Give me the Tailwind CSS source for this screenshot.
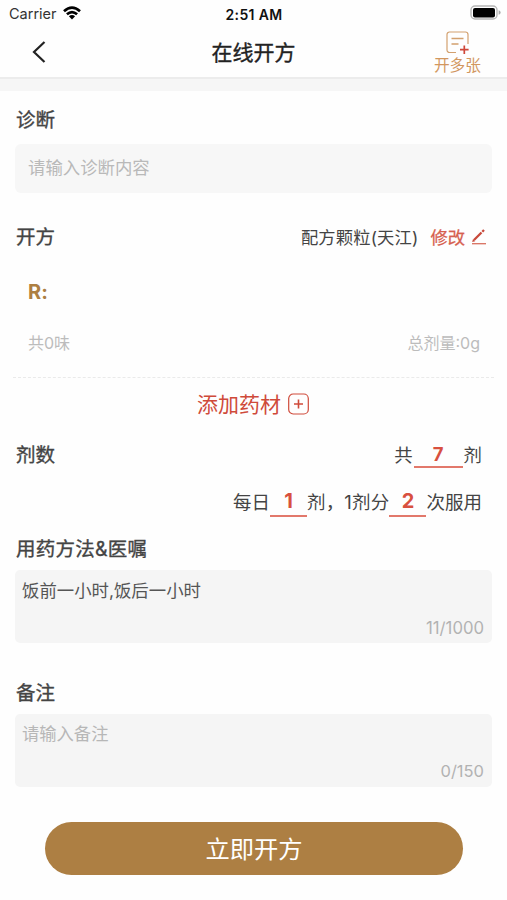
<!DOCTYPE html>
<html lang="zh-CN">
<head>
<meta charset="utf-8">
<title>在线开方</title>
<script src="https://cdn.jsdelivr.net/npm/@tailwindcss/browser@4"></script>
</head>
<body class="bg-white">
<div class="w-[507px] h-[900px] overflow-hidden bg-[#fefefe] flex flex-col font-['Inter','Noto_Sans_CJK_SC',sans-serif] text-[#444] whitespace-nowrap">
  <!-- Status bar -->
  <div class="grid grid-cols-3 items-center h-7 shrink-0 pl-[9px] pr-[6px] text-[#111]">
    <div class="flex items-center gap-[6px]">
      <span class="text-[14.5px] text-[#333]">Carrier</span>
      <svg class="w-[18px] h-[14px] -mt-[2px]" viewBox="0 0 18 14" fill="none" stroke="#000" stroke-width="2.7"><path d="M1 5.2Q9-2 17 5.2M3.9 8.3Q9 3.9 14.1 8.3"/><path d="M5.9 10.2Q9 7.9 12.1 10.2L9 13.6Z" fill="#000" stroke="none"/></svg>
    </div>
    <div class="text-center text-[14px] font-semibold tracking-[0.35px] -ml-[2px]">2:51 AM</div>
    <svg class="w-[31px] h-[15px] justify-self-end -mt-[3px]" viewBox="0 0 31 15"><rect x="1" y="1" width="26" height="13" rx="4" fill="#fff" stroke="#b5b5b5" stroke-width="1.4"/><rect x="3" y="3" width="22" height="9.4" rx="2" fill="#000"/><path d="M28.6 5.3q2 .5 2 2.2t-2 2.2z" fill="#aaa"/></svg>
  </div>
  <!-- Navigation -->
  <div class="grid grid-cols-3 items-center h-[51px] shrink-0 border-b-2 border-[#ececec]">
    <svg class="ml-[31px] w-[16px] h-[24px] -mt-[2px]" viewBox="0 0 16 24" fill="none" stroke="#222" stroke-width="2.2"><path d="M13.5 2L3 12l10.500 10"/></svg>
    <div class="text-center text-[21px] text-[#222] [-webkit-text-stroke:0.35px]">在线开方</div>
    <div class="justify-self-end mr-[25px] flex flex-col items-center pt-[2px]">
      <svg class="w-[24px] h-[24px]" viewBox="0 0 24 24" fill="none" stroke="#d2a06e" stroke-width="1.2"><path d="M10 21.500H3.500a2.500 2.500 0 0 1-2.500-2.500V3.500a2.500 2.500 0 0 1 2.500-2.500H19.500A2.500 2.500 0 0 1 22 3.500v9.500"/><path d="M5.500 7.500h12M5.500 13h7" stroke-width="1.500"/><path d="M18.300 14.500v8.500M14 18.700h8.600" stroke="#cf4739" stroke-width="1.700"/></svg>
      <span class="text-[15.700px] leading-[20px] pt-px mr-[1px] text-[#d2975f]">开多张</span>
    </div>
  </div>
  <div class="h-[12px] bg-[#f6f6f6] shrink-0"></div>
  <!-- Diagnosis -->
  <div class="h-[53px] shrink-0 pl-4 pt-[7px] flex items-center text-[19.500px] [-webkit-text-stroke:0.35px]">诊断</div>
  <div class="mx-[15px] h-[49px] shrink-0 rounded-[6px] bg-[#f7f7f7] flex items-center pl-[13px] text-[17.400px] text-[#b9b9b9]">请输入诊断内容</div>
  <!-- Prescription -->
  <div class="h-[86px] shrink-0 pl-4 pr-[20px] pt-[3px] flex items-center justify-between">
    <span class="text-[19.500px] [-webkit-text-stroke:0.35px]">开方</span>
    <div class="flex items-center text-[17.300px]">
      <span class="tracking-[0.15px]">配方颗粒(天江)</span>
      <span class="ml-[12px] text-[#d6604e] [-webkit-text-stroke:0.25px]">修改</span>
      <svg class="ml-[6px] w-[16px] h-[16px] -mt-px" viewBox="0 0 16 16" fill="none"><path d="M3 11L10.500 3.500" stroke="#c8493b" stroke-width="2.300"/><path d="M11.300 2.700L13 1" stroke="#c8493b" stroke-width="2.300"/><path d="M1 14.700H15" stroke="#d8705f" stroke-width="1.300"/><path d="M1.200 13l.8-3 2.200 2.200z" fill="#c8493b"/></svg>
    </div>
  </div>
  <div class="h-[26px] shrink-0 pl-[28px] flex items-center text-[20px] font-bold text-[#ad7f42] [font-feature-settings:'calt'_0]">R:</div>
  <div class="h-[72px] shrink-0 pl-[28px] pr-[27px] pt-[4px] flex items-center justify-between text-[16px] text-[#bcbcbc]"><span>共0味</span><span>总剂量:0g</span></div>
  <div class="mx-[13px] border-t border-dashed border-[#eaeaea] shrink-0"></div>
  <div class="h-[52px] shrink-0 flex items-center justify-center gap-[7px] pr-px pt-px text-[21px] text-[#cf4a3a]">
    <span>添加药材</span>
    <svg class="w-[21px] h-[22px] -mt-px" viewBox="0 0 21 22" fill="none" stroke="#cf4a3a"><rect x=".7" y="1" width="19.600" height="20" rx="4.500" stroke-width="1.200"/><path d="M10.500 6.500v9M6 11h9" stroke-width="1.600"/></svg>
  </div>
  <!-- Dosage -->
  <div class="h-[48px] shrink-0 pl-4 pr-[25px] pt-[3px] flex items-center justify-between">
    <span class="text-[19.500px] [-webkit-text-stroke:0.35px]">剂数</span>
    <div class="flex items-center text-[18.400px]"><span>共</span><span class="mx-[1px] w-[49px] h-[25px] leading-[22px] border-b-2 border-[#e2786b] text-center text-[18.500px] font-bold text-[#d8503f]">7</span><span>剂</span></div>
  </div>
  <div class="h-[48px] shrink-0 pr-[25px] pt-[2px] flex items-center justify-end text-[18.500px]">
    <span>每日</span><span class="w-[37px] h-[27px] leading-[23px] border-b-2 border-[#e2786b] text-center text-[20px] font-bold text-[#d8503f]">1</span><span class="tracking-[0.2px]">剂，1剂分</span><span class="w-[37px] h-[27px] leading-[23px] border-b-2 border-[#e2786b] text-center text-[20px] font-bold text-[#d8503f]">2</span><span>次服用</span>
  </div>
  <!-- Instructions -->
  <div class="h-[44px] shrink-0 pl-4 pt-[4px] flex items-center text-[19.500px] tracking-[0.25px] [-webkit-text-stroke:0.35px]">用药方法&amp;医嘱</div>
  <div class="mx-[15px] h-[73px] shrink-0 rounded-[5px] bg-[#f5f5f5] pl-[7px] pr-[8px] flex flex-col justify-between text-[17.400px]">
    <div class="h-[41px] leading-[41px] text-[#555]">饭前一小时,饭后一小时</div>
    <div class="h-[30px] leading-[30px] text-right text-[16.700px] text-[#b2b2b2]">11/1000</div>
  </div>
  <!-- Remarks -->
  <div class="h-[71px] shrink-0 pl-4 pt-[30px] flex items-center text-[19.500px] [-webkit-text-stroke:0.35px]">备注</div>
  <div class="mx-[15px] h-[73px] shrink-0 rounded-[5px] bg-[#f5f5f5] pl-[7px] pr-[8px] flex flex-col justify-between text-[17.300px]">
    <div class="h-[40px] leading-[40px] text-[#b7b7b7]">请输入备注</div>
    <div class="h-[31px] leading-[31px] text-right text-[16.500px] text-[#b2b2b2]">0/150</div>
  </div>
  <button class="mt-[35px] ml-[45px] w-[418px] h-[53px] shrink-0 rounded-full bg-[#ad7f43] pt-[2px] text-white text-[24.300px]">立即开方</button>
</div>
</body>
</html>
